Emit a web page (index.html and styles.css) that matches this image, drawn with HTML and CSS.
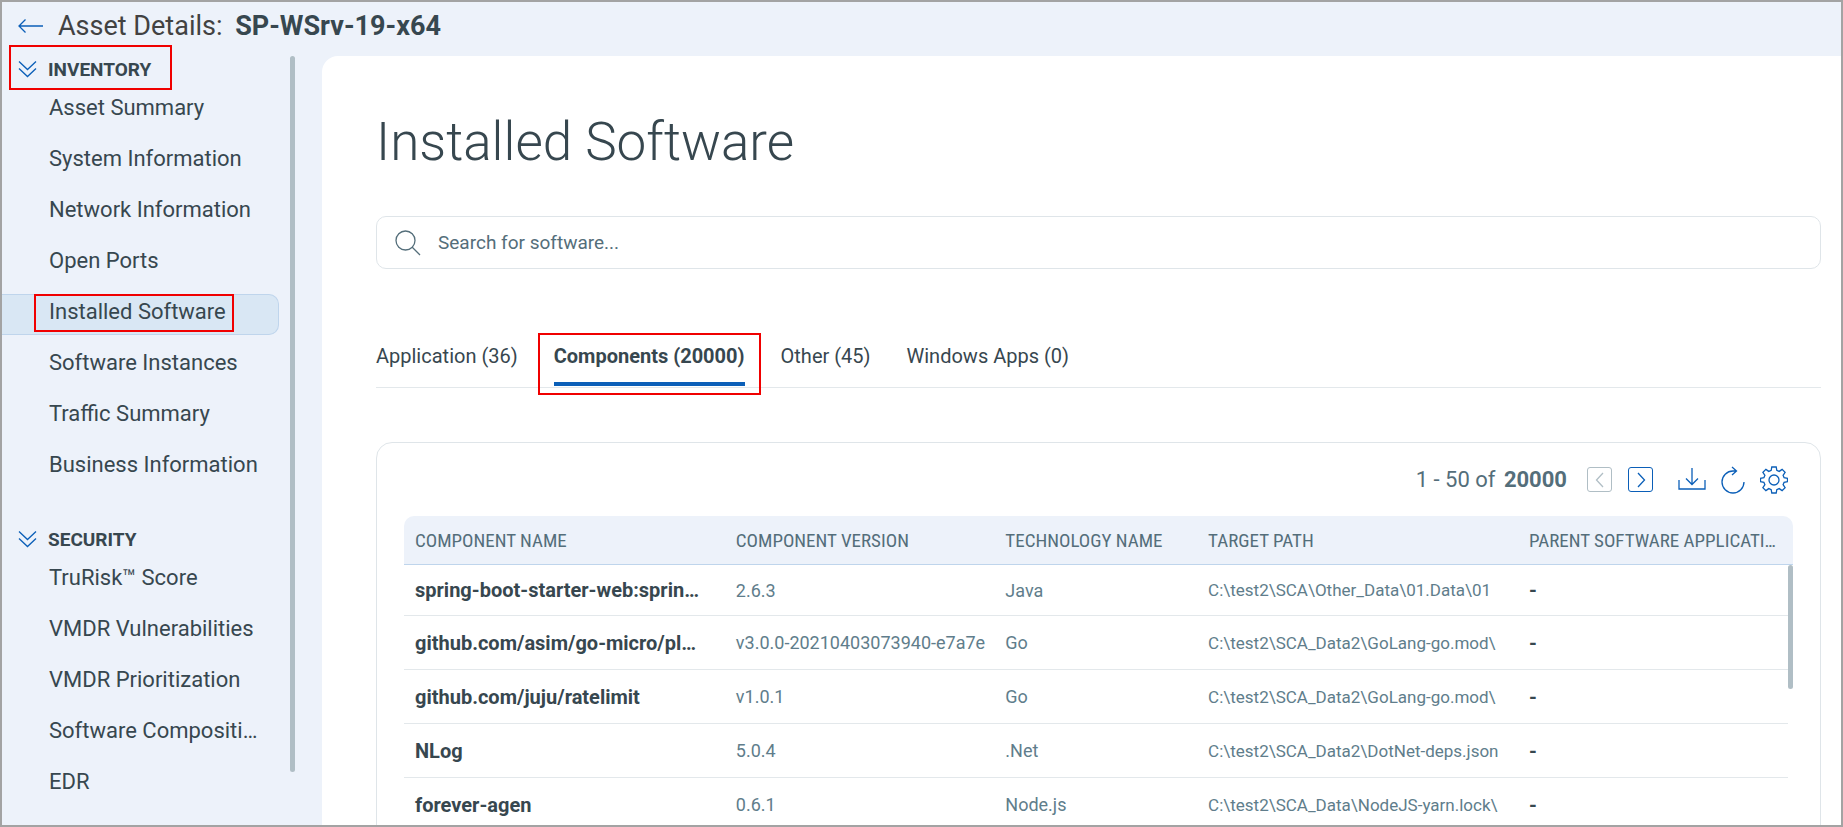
FILE: index.html
```html
<!DOCTYPE html>
<html lang="en">
<head>
    <meta charset="UTF-8">
    <meta name="viewport" content="width=device-width, initial-scale=1.0">
    <title>Asset Details - SP-WSrv-19-x64</title>
    <link rel="stylesheet" href="styles.css">
</head>
<body>

    <header class="topbar">
        <a href="#" class="back" aria-label="Back">
            <svg width="26" height="16" viewBox="0 0 26 16"><path d="M25 8H1M7.500 1.500L1 8l6.500 6.500"/></svg>
        </a>
        <h1 class="asset-title">Asset Details: <strong>SP-WSrv-19-x64</strong></h1>
    </header>

    <div class="layout">
        <nav class="sidebar">
            <div class="nav-scroll">
                <section class="nav-group">
                    <button type="button" class="nav-heading marked">
                        <svg width="20" height="18" viewBox="0 0 20 18"><path d="M1 1.500l8.500 8 8.500-8M1 8.500l8.500 8 8.500-8"/></svg>
                        INVENTORY
                    </button>
                    <ul class="nav-list">
                        <li><a href="#"><span>Asset Summary</span></a></li>
                        <li><a href="#"><span>System Information</span></a></li>
                        <li><a href="#"><span>Network Information</span></a></li>
                        <li><a href="#"><span>Open Ports</span></a></li>
                        <li><a href="#" class="active"><span class="marked">Installed Software</span></a></li>
                        <li><a href="#"><span>Software Instances</span></a></li>
                        <li><a href="#"><span>Traffic Summary</span></a></li>
                        <li><a href="#"><span>Business Information</span></a></li>
                    </ul>
                </section>
                <section class="nav-group">
                    <button type="button" class="nav-heading">
                        <svg width="20" height="18" viewBox="0 0 20 18"><path d="M1 1.500l8.500 8 8.500-8M1 8.500l8.500 8 8.500-8"/></svg>
                        SECURITY
                    </button>
                    <ul class="nav-list">
                        <li><a href="#"><span>TruRisk™ Score</span></a></li>
                        <li><a href="#"><span>VMDR Vulnerabilities</span></a></li>
                        <li><a href="#"><span>VMDR Prioritization</span></a></li>
                        <li><a href="#"><span>Software Compositi…</span></a></li>
                        <li><a href="#"><span>EDR</span></a></li>
                    </ul>
                </section>
            </div>
            <div class="scrollbar"></div>
        </nav>

        <main class="content">
            <h2 class="page-title">Installed Software</h2>

            <label class="search">
                <svg width="26" height="26" viewBox="0 0 26 26"><circle cx="10.500" cy="10.500" r="9.500"/><path d="M17 17l8 8"/></svg>
                <input type="text" placeholder="Search for software..." aria-label="Search for software">
            </label>

            <div class="tabs">
                <button type="button" class="tab">Application (36)</button>
                <button type="button" class="tab selected marked">Components (20000)</button>
                <button type="button" class="tab">Other (45)</button>
                <button type="button" class="tab">Windows Apps (0)</button>
            </div>

            <div class="card">
                <div class="toolbar">
                    <p class="range">1 - 50 of <strong>20000</strong></p>
                    <div class="pager">
                        <button type="button" class="page-btn" aria-label="Previous page" disabled>
                            <svg width="10" height="16" viewBox="0 0 10 16"><path d="M8 1L1.500 8 8 15"/></svg>
                        </button>
                        <button type="button" class="page-btn" aria-label="Next page">
                            <svg width="10" height="16" viewBox="0 0 10 16"><path d="M2 1l6.500 7L2 15"/></svg>
                        </button>
                    </div>
                    <div class="tools">
                        <button type="button" class="tool-btn" aria-label="Download">
                            <svg width="28" height="28" viewBox="0 0 28 28"><path d="M14 2v16M8 12.500l6 6 6-6M1 14v9h26v-9"/></svg>
                        </button>
                        <button type="button" class="tool-btn" aria-label="Refresh">
                            <svg width="28" height="28" viewBox="0 0 28 28"><path d="M17 5h-3a11 11 0 1 0 11 11M13 1l4.500 4-4.500 4"/></svg>
                        </button>
                        <button type="button" class="tool-btn" aria-label="Settings">
                            <svg width="28" height="28" viewBox="0 0 28 28"><circle cx="14" cy="14" r="5"/><path d="M11.800 1h4.400l.6 3.400 2.400 1 2.900-2 3 3-2 2.900 1 2.400 3.400.6v3.400l-3.400.6-1 2.400 2 2.900-3 3-2.900-2-2.400 1-.6 3.400h-4.400l-.6-3.400-2.400-1-2.900 2-3-3 2-2.900-1-2.400L.5 15.700v-3.400l3.400-.6 1-2.400-2-2.900 3-3 2.900 2 2.400-1z"/></svg>
                        </button>
                    </div>
                </div>

                <div class="grid">
                    <table class="components">
                        <colgroup>
                            <col class="col-name">
                            <col class="col-version">
                            <col class="col-tech">
                            <col class="col-path">
                            <col class="col-parent">
                        </colgroup>
                        <thead>
                            <tr>
                                <th>COMPONENT NAME</th>
                                <th>COMPONENT VERSION</th>
                                <th>TECHNOLOGY NAME</th>
                                <th>TARGET PATH</th>
                                <th>PARENT SOFTWARE APPLICATI…</th>
                            </tr>
                        </thead>
                        <tbody>
                            <tr>
                                <td class="name">spring-boot-starter-web:sprin…</td>
                                <td>2.6.3</td>
                                <td>Java</td>
                                <td><div class="path">C:\test2\SCA\Other_Data\01.Data\01</div></td>
                                <td class="name">-</td>
                            </tr>
                            <tr>
                                <td class="name">github.com/asim/go-micro/pl…</td>
                                <td>v3.0.0-20210403073940-e7a7e</td>
                                <td>Go</td>
                                <td><div class="path">C:\test2\SCA_Data2\GoLang-go.mod\</div></td>
                                <td class="name">-</td>
                            </tr>
                            <tr>
                                <td class="name">github.com/juju/ratelimit</td>
                                <td>v1.0.1</td>
                                <td>Go</td>
                                <td><div class="path">C:\test2\SCA_Data2\GoLang-go.mod\</div></td>
                                <td class="name">-</td>
                            </tr>
                            <tr>
                                <td class="name">NLog</td>
                                <td>5.0.4</td>
                                <td>.Net</td>
                                <td><div class="path">C:\test2\SCA_Data2\DotNet-deps.json</div></td>
                                <td class="name">-</td>
                            </tr>
                            <tr>
                                <td class="name">forever-agen</td>
                                <td>0.6.1</td>
                                <td>Node.js</td>
                                <td><div class="path">C:\test2\SCA_Data\NodeJS-yarn.lock\</div></td>
                                <td class="name">-</td>
                            </tr>
                        </tbody>
                    </table>
                    <div class="grid-track">
                        <div class="grid-thumb"></div>
                    </div>
                </div>
            </div>
        </main>
    </div>

</body>
</html>
```
FILE: styles.css
```css
/* Global Styles */
*,
*::after {
    box-sizing: border-box;
}

body {
    margin: 0;
    height: 100vh;
    border: 2px solid #a3a3a3;
    background: #edf2fa;
    color: #37474f;
    font-family: Roboto, Arial, sans-serif;
    font-size: 18px;
    display: flex;
    flex-direction: column;
    overflow: hidden;
}

button {
    font: inherit;
    color: inherit;
    background: none;
    border: none;
    padding: 0;
    cursor: pointer;
}

a {
    color: inherit;
    text-decoration: none;
}

svg {
    display: block;
    flex: none;
    fill: none;
    stroke: #0b5fb8;
    stroke-width: 1.3;
}

/* Red outline around highlighted items */
.marked {
    position: relative;
}

.marked::after {
    content: "";
    position: absolute;
    border: 2px solid #f00000;
}

/* Top bar */
.topbar {
    display: flex;
    align-items: center;
    gap: 14px;
    height: 54px;
    padding: 0 16px 6px;
    flex: none;
}

.asset-title {
    margin: 0;
    font-size: 27px;
    font-weight: 400;
    color: #424242;
}

.asset-title strong {
    margin-left: 6px;
    font-weight: 700;
    color: #37474f;
}

.layout {
    display: flex;
    flex: 1;
    min-height: 0;
}

/* Sidebar */
.sidebar {
    display: flex;
    flex: none;
    width: 320px;
}

.nav-scroll {
    width: 288px;
}

.nav-group {
    margin-bottom: 38px;
}

.nav-heading {
    display: flex;
    align-items: center;
    gap: 10px;
    height: 26px;
    padding-left: 16px;
    font-size: 19px;
    font-weight: 700;
}

.nav-heading.marked::after {
    top: -11px;
    left: 7px;
    right: -21px;
    height: 45px;
}

.nav-list {
    list-style: none;
    margin: 8px 0 0;
    padding: 0;
    display: flex;
    flex-direction: column;
    gap: 10px;
}

.nav-list a {
    display: flex;
    align-items: center;
    height: 41px;
    width: 277px;
    padding: 0 0 6px 47px;
    border: 1px solid transparent;
    border-left: none;
    font-size: 22px;
    line-height: 26px;
    white-space: nowrap;
}

.nav-list a.active {
    background: #d9e7f4;
    border-color: #bfd5ec;
    border-radius: 0 10px 10px 0;
}

.nav-list .marked::after {
    top: -5px;
    bottom: -7px;
    left: -15px;
    right: -8px;
}

.scrollbar {
    width: 5px;
    height: 716px;
    border-radius: 3px;
    background: #b0bec5;
}

/* Content */
.content {
    flex: 1;
    min-width: 0;
    padding: 54px 20px 0 54px;
    background: #fff;
    border-top-left-radius: 16px;
    overflow: hidden;
}

.page-title {
    margin: 0;
    font-size: 53px;
    line-height: 64px;
    font-weight: 300;
}

.search {
    display: flex;
    align-items: center;
    gap: 17px;
    height: 53px;
    margin-top: 42px;
    padding: 0 18px;
    border: 1px solid #dfe5e9;
    border-radius: 10px;
}

.search svg {
    stroke: #546e7a;
}

.search input {
    flex: 1;
    border: none;
    outline: none;
    background: none;
    padding: 0;
    font: inherit;
    font-size: 19px;
    color: #37474f;
}

.search input::placeholder {
    color: #546e7a;
    opacity: 1;
}

.tabs {
    display: flex;
    gap: 36px;
    height: 63px;
    margin-top: 56px;
    border-bottom: 1px solid #e3e8eb;
}

.tab {
    height: 61px;
    padding-top: 5px;
    border-bottom: 4px solid transparent;
    font-size: 20px;
}

.tab.selected {
    border-bottom-color: #0b5fb8;
    font-weight: 700;
}

.tab.marked::after {
    top: 8px;
    bottom: -13px;
    left: -16px;
    right: -16px;
}

/* Table card */
.card {
    margin-top: 54px;
    height: 600px;
    padding: 0 27px;
    border: 1px solid #dfe5e9;
    border-radius: 16px;
}

.toolbar {
    display: flex;
    align-items: center;
    justify-content: flex-end;
    height: 73px;
    padding-right: 5px;
    color: #546e7a;
}

.range {
    margin: 0;
    font-size: 22px;
}

.range strong {
    margin-left: 3px;
}

.pager {
    display: flex;
    gap: 16px;
    margin: 0 25px 0 20px;
}

.page-btn {
    display: flex;
    align-items: center;
    justify-content: center;
    width: 25px;
    height: 25px;
    border: 1px solid #0b5fb8;
    border-radius: 3px;
}

.page-btn:disabled {
    border-color: #b0bec5;
}

.page-btn:disabled svg {
    stroke: #b0bec5;
}

.tools {
    display: flex;
    gap: 13px;
}

.grid {
    position: relative;
}

.components {
    width: 100%;
    table-layout: fixed;
    border-collapse: separate;
    border-spacing: 0;
}

.col-name,
.col-path {
    width: 23.1%;
}

.col-version {
    width: 19.4%;
}

.col-tech {
    width: 14.6%;
}

.components th {
    height: 49px;
    padding: 0 11px;
    background: #edf2fa;
    border-bottom: 1px solid #bfd5ec;
    font-family: "Roboto Condensed", Roboto, Arial, sans-serif;
    font-size: 19px;
    font-weight: 400;
    text-align: left;
    white-space: nowrap;
    color: #546e7a;
}

.components th:first-child {
    border-top-left-radius: 10px;
}

.components th:last-child {
    border-top-right-radius: 10px;
}

.components td {
    height: 54px;
    padding: 0 11px;
    border-bottom: 1px solid #e3e8eb;
    white-space: nowrap;
    color: #607d8b;
}

.components tbody tr:first-child td {
    height: 51px;
}

.components .name {
    font-size: 20px;
    font-weight: 700;
    color: #37474f;
}

.path {
    font-size: 17px;
}

/* Table scrollbar */
.grid-track {
    position: absolute;
    top: 49px;
    bottom: 0;
    right: 0;
    width: 5px;
    background: #fff;
}

.grid-thumb {
    height: 124px;
    border-radius: 3px;
    background: #b0bec5;
}
```
